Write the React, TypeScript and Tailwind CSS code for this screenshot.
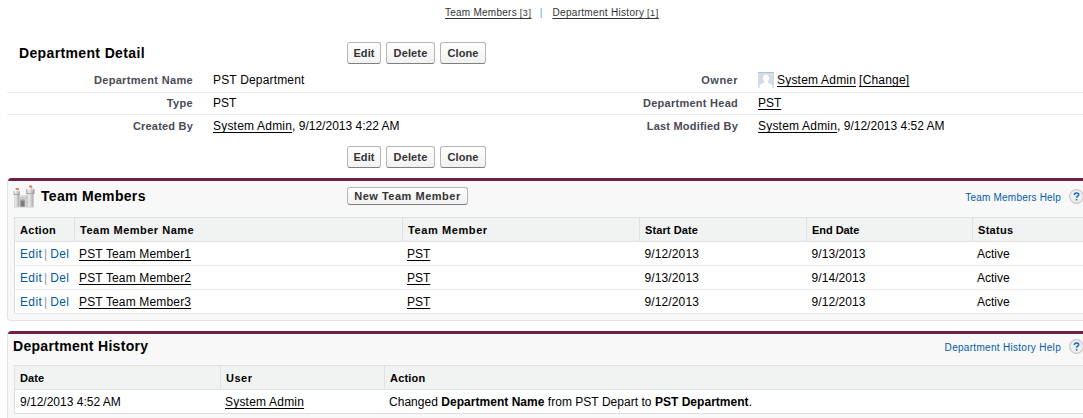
import type { ReactNode } from "react";

function Button({ children, className }: { children: ReactNode; className: string }) {
  return (
    <button
      className={`flex shrink-0 items-center justify-center rounded-[3px] border border-[#b5b5b5] border-b-[#7f7f7f] bg-linear-to-b from-white to-[#f1f1f1] text-[11px] leading-none font-bold whitespace-nowrap text-[#333] ${className}`}
    >
      {children}
    </button>
  );
}

function RecordActions() {
  return (
    <div className="flex gap-[5px]">
      <Button className="h-[22px] w-[34px] tracking-[0.1px]">Edit</Button>
      <Button className="h-[22px] w-[49px] tracking-[0.15px]">Delete</Button>
      <Button className="h-[22px] w-[46px] tracking-[0.1px]">Clone</Button>
    </div>
  );
}

function Link({ children, className = "" }: { children: ReactNode; className?: string }) {
  return (
    <a className={`underline decoration-1 underline-offset-[2px] [text-decoration-skip-ink:none] ${className}`}>
      {children}
    </a>
  );
}

function Avatar() {
  return (
    <svg className="mr-[3px] h-4 w-4 shrink-0" viewBox="0 0 16 16">
      <rect width="16" height="16" fill="#d3dde4" />
      <rect width="16" height="1" fill="#b4c1c9" />
      <path
        d="M8 2.600c2 0 3.200 1.400 3.100 3.400-.1 1.500-.6 2.500-1.300 3.300v1.200c0 .8 4.700 1.300 4.700 4.500v1h-13v-1c0-3.200 4.700-3.700 4.700-4.500V9.300C5.400 8.500 5 7.500 4.900 6 4.800 4 6 2.600 8 2.600z"
        fill="#fff"
      />
    </svg>
  );
}

function CastleIcon() {
  return (
    <svg className="mt-px h-6 w-[22px] shrink-0" viewBox="0 0 22 24">
      <defs>
        <linearGradient id="stone" x1="0" x2="1" y1="0" y2="0">
          <stop offset="0" stopColor="#b0b0b0" />
          <stop offset="0.35" stopColor="#ececec" />
          <stop offset="1" stopColor="#999" />
        </linearGradient>
      </defs>
      <path d="M1 21h20v1.500H1z" fill="#cfcfcf" />
      <path d="M6 10h1v1.500h1.500V10h1.700v1.500h1.600V10H14v11.500H6z" fill="#cbcbcb" />
      <path d="M.5 6H2v1.300h1.300V6h1.500v1.300H6V6h.8v3.700L6 10.500v11H1.300v-11L.5 9.700z" fill="url(#stone)" />
      <path d="M13 4h1.600v1.300h1.600V4h2v1.300h1.600V4h1.700v4.200l-1 1.300v12h-6.500v-12L13 8.200z" fill="url(#stone)" />
      <path d="M1 9.500h5.500M13.500 8.500h7.500" stroke="#999" strokeWidth="0.800" />
      <path d="M7 21.500v-5c0-2.900 5-2.900 5 0v5z" fill="#9a9a9a" />
      <path d="M8.300 21.500v-4.300c0-1.500 2.600-1.500 2.600 0v4.300z" fill="#777" />
      <path d="M5.300 3v3.500M18.800 1v4" stroke="#999" strokeWidth="0.700" />
      <path d="M2.600 3h2.700v1.800H2.600zM16.200.5h2.700v2h-2.700z" fill="#f06a3a" />
    </svg>
  );
}

function HelpLink({ children, className }: { children: ReactNode; className: string }) {
  return (
    <a className="flex shrink-0 items-center gap-2 text-[10px] leading-none text-[#015ba7]">
      <span className={className}>{children}</span>
      <svg className="-mt-0.5 h-[15px] w-[15px]" viewBox="0 0 15 15">
        <circle cx="7.500" cy="7.500" r="6.900" fill="#eeeeef" stroke="#b9bbbd" />
        <path
          d="M5.400 6.100c0-2.700 4.300-2.600 4.300-.4 0 1.400-2.100 1.500-2.100 3M7.600 9.900v1.500"
          fill="none"
          stroke="#1766c4"
          strokeWidth="1.500"
        />
      </svg>
    </a>
  );
}

function RelatedList({ className, children }: { className: string; children: ReactNode }) {
  return (
    <section
      className={`ml-[7px] shrink-0 overflow-hidden rounded-l-[4px] border-b border-l border-[#e0e3e5] bg-[#f8f8f8] ${className}`}
    >
      <div className="h-[3px] bg-[#702042]" />
      {children}
    </section>
  );
}

type Field = { label: string; tracking: string; value: ReactNode };

function DetailRow({ left, right }: { left: Field; right: Field }) {
  return (
    <div className="ml-[7px] grid h-full grid-cols-[186px_20px_339px_186px_20px_1fr] items-center">
      <span className={`text-right text-[11px] font-bold text-[#4a4a56] ${left.tracking}`}>{left.label}</span>
      <span />
      <span>{left.value}</span>
      <span className={`text-right text-[11px] font-bold text-[#4a4a56] ${right.tracking}`}>{right.label}</span>
      <span />
      <span className="flex items-center whitespace-pre">{right.value}</span>
    </div>
  );
}

const members = [
  { name: "PST Team Member1", start: "9/12/2013", end: "9/13/2013" },
  { name: "PST Team Member2", start: "9/13/2013", end: "9/14/2013" },
  { name: "PST Team Member3", start: "9/12/2013", end: "9/12/2013" },
];

const memberColumns = [
  { title: "Action", tracking: "tracking-[0.3px]" },
  { title: "Team Member Name", tracking: "tracking-[0.5px]" },
  { title: "Team Member", tracking: "tracking-[0.6px]" },
  { title: "Start Date", tracking: "tracking-[0.1px]" },
  { title: "End Date", tracking: "tracking-[-0.05px]" },
  { title: "Status", tracking: "tracking-[0.3px]" },
];

const historyColumns = [
  { title: "Date", tracking: "tracking-[0.1px]" },
  { title: "User", tracking: "tracking-[0.5px]" },
  { title: "Action", tracking: "tracking-[0.2px]" },
];

function HeaderRow({ columns }: { columns: { title: string; tracking: string }[] }) {
  return (
    <tr className="h-6 bg-[#f1f3f2] text-[11px]">
      {columns.map((c) => (
        <th key={c.title} className={`border border-[#dfe2e3] p-0 pl-[5px] ${c.tracking}`}>
          {c.title}
        </th>
      ))}
    </tr>
  );
}

function Admin() {
  return <Link className="tracking-[0.2px]">System Admin</Link>;
}

export default function App() {
  return (
    <main className="flex h-[418px] w-full flex-col overflow-hidden bg-white font-['Liberation_Sans',Arial,sans-serif] text-[12px] leading-[14px] text-black">
      <nav className="flex h-[42px] shrink-0 pt-[6px] pl-[445px] text-[10px] whitespace-pre text-[#333]">
        <Link>
          <span className="tracking-[0.25px]">Team Members</span> <span className="text-[9px] tracking-[0.6px]">[3]</span>
        </Link>
        <span className="mr-[10px] ml-[8px] w-[3px] text-center text-[#5b9bd0]">|</span>
        <Link>
          <span className="tracking-[0.31px]">Department History</span> <span className="text-[9px] tracking-[0.6px]">[1]</span>
        </Link>
      </nav>

      <header className="flex h-[27px] shrink-0 items-start">
        <h1 className="w-[347px] pt-[4px] pl-[19px] text-[14px] font-bold tracking-[0.36px]">Department Detail</h1>
        <RecordActions />
      </header>

      <div className="grid h-[77px] shrink-0 grid-rows-[23px_22px_22px]">
        <div className="pb-px">
          <DetailRow
            left={{
              label: "Department Name",
              tracking: "tracking-[0.33px]",
              value: <span className="tracking-[0.17px]">PST Department</span>,
            }}
            right={{
              label: "Owner",
              tracking: "tracking-[0.5px]",
              value: (
                <>
                  <Avatar />
                  <Admin />
                  <span className="w-[3px]" />
                  <Link className="tracking-[0.2px]">[Change]</Link>
                </>
              ),
            }}
          />
        </div>
        <div className="flex flex-col pb-px">
          <div className="ml-[7px] h-px shrink-0 bg-[#ececec]" />
          <DetailRow
            left={{ label: "Type", tracking: "tracking-[0.33px]", value: "PST" }}
            right={{ label: "Department Head", tracking: "tracking-[0.26px]", value: <Link>PST</Link> }}
          />
        </div>
        <div className="flex flex-col">
          <div className="ml-[7px] h-px shrink-0 bg-[#ececec]" />
          <DetailRow
            left={{
              label: "Created By",
              tracking: "tracking-[0.2px]",
              value: <><Admin />, 9/12/2013 4:22 AM</>,
            }}
            right={{
              label: "Last Modified By",
              tracking: "tracking-[0.2px]",
              value: <><Admin />, 9/12/2013 4:52 AM</>,
            }}
          />
        </div>
      </div>

      <div className="h-8 shrink-0 pl-[347px]">
        <RecordActions />
      </div>

      <RelatedList className="h-[143px]">
        <div className="flex h-9 items-start">
          <div className="flex w-[339px] items-start pt-[3px] pl-[5px]">
            <CastleIcon />
            <h2 className="mt-[5px] ml-[6px] text-[14px] font-bold tracking-[0.32px]">Team Members</h2>
          </div>
          <div className="flex-1 pt-[6px]">
            <Button className="h-[18px] w-[121px] tracking-[0.52px]">New Team Member</Button>
          </div>
          <div className="-mr-px pt-[10px]">
            <HelpLink className="tracking-[0.2px]">Team Members Help</HelpLink>
          </div>
        </div>
        <table className="ml-[6px] w-[1070px] table-fixed border-collapse border border-[#dcdfe0] bg-white text-left">
          <colgroup>
            <col className="w-[60px]" />
            <col className="w-[328px]" />
            <col className="w-[237px]" />
            <col className="w-[167px]" />
            <col className="w-[166px]" />
            <col />
          </colgroup>
          <thead>
            <HeaderRow columns={memberColumns} />
          </thead>
          <tbody>
            {members.map((m) => (
              <tr key={m.name} className="h-6 border-b border-[#e6e6e6]">
                <td className="p-0 pt-px pl-[5px] whitespace-nowrap text-[#015ba7]">
                  <span className="tracking-[0.35px]">Edit</span>
                  <span className="mr-[3px] ml-[2px] text-[#999]">|</span>
                  <span className="tracking-[0.3px]">Del</span>
                </td>
                <td className="p-0 pl-[4.500px]"><Link className="tracking-[0.16px]">{m.name}</Link></td>
                <td className="p-0 pl-[4.500px]"><Link>PST</Link></td>
                <td className="p-0 pl-[5px] tracking-[0.12px]">{m.start}</td>
                <td className="p-0 pl-[5px] tracking-[0.08px]">{m.end}</td>
                <td className="p-0 pl-[4.500px]">Active</td>
              </tr>
            ))}
          </tbody>
        </table>
      </RelatedList>

      <div className="h-[10px] shrink-0" />

      <RelatedList className="h-[100px]">
        <div className="flex h-[31px] items-start justify-between">
          <h2 className="pt-[5px] pl-[5px] text-[14px] font-bold tracking-[0.3px]">Department History</h2>
          <div className="-mr-px pt-[7px]">
            <HelpLink className="tracking-[0.3px]">Department History Help</HelpLink>
          </div>
        </div>
        <table className="ml-[6px] w-[1070px] table-fixed border-collapse border border-[#dcdfe0] bg-white text-left">
          <colgroup>
            <col className="w-[206px]" />
            <col className="w-[164px]" />
            <col />
          </colgroup>
          <thead>
            <HeaderRow columns={historyColumns} />
          </thead>
          <tbody>
            <tr className="h-6">
              <td className="p-0 pl-[5px]">9/12/2013 4:52 AM</td>
              <td className="p-0 pl-[4.500px]"><Admin /></td>
              <td className="p-0 pl-[4.500px] tracking-[0.03px]">
                Changed <b>Department Name</b> from PST Depart to <b>PST Department</b>.
              </td>
            </tr>
          </tbody>
        </table>
      </RelatedList>
    </main>
  );
}
